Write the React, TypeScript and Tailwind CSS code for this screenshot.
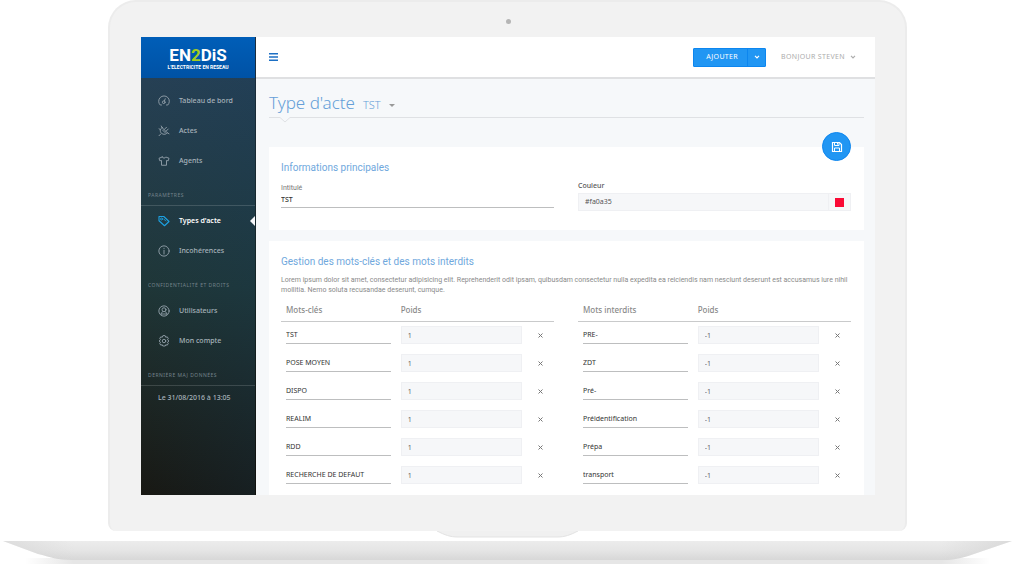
import type { ReactNode } from "react";

type Keyword = { word: string; weight: string };

const keywords: Keyword[] = [
  { word: "TST", weight: "1" },
  { word: "POSE MOYEN", weight: "1" },
  { word: "DISPO", weight: "1" },
  { word: "REALIM", weight: "1" },
  { word: "RDD", weight: "1" },
  { word: "RECHERCHE DE DEFAUT", weight: "1" },
];

const forbidden: Keyword[] = [
  { word: "PRE-", weight: "-1" },
  { word: "ZDT", weight: "-1" },
  { word: "Pré-", weight: "-1" },
  { word: "Préidentification", weight: "-1" },
  { word: "Prépa", weight: "-1" },
  { word: "transport", weight: "-1" },
];

function Icon({ children }: { children: ReactNode }) {
  return (
    <svg
      viewBox="0 0 24 24"
      className="size-3 shrink-0"
      fill="none"
      stroke="currentColor"
      strokeWidth="1.8"
      strokeLinecap="round"
      strokeLinejoin="round"
      aria-hidden="true"
    >
      {children}
    </svg>
  );
}

const icons = {
  gauge: (
    <Icon>
      <path d="M7 20H4.500a10.600 10.600 0 1 1 15 0H17" />
      <circle cx="11.500" cy="14.500" r="2.700" />
      <path d="M12.800 12 14.500 7.500" />
    </Icon>
  ),
  plug: (
    <Icon>
      <path d="m8.500 5.500 10 10c-1.500 2.500-5.500 4-9 2.500s-5-4-5-7 1.500-4.500 4-5.500Z" />
      <path d="m9 10 6 6M12.500 9 17 4.500M16 12.500 20.500 8M6 17.500 2 21.500M2 7.500l3 2M8.500 5.500 6.500 2M18.500 15.500l3.500 2" />
    </Icon>
  ),
  shirt: (
    <Icon>
      <path d="M8.500 4 2 6.500l1.500 5L7 11v9.500h10V11l3.500.5 1.500-5L15.500 4c-1 3-6 3-7 0Z" />
    </Icon>
  ),
  tag: (
    <Icon>
      <path d="M2 3v8.500L13 21.500l9-8.500L11.500 3Z" strokeWidth="2.200" />
      <circle cx="7" cy="8" r="2" />
      <path d="m11.500 8 4 4" />
    </Icon>
  ),
  info: (
    <Icon>
      <circle cx="12" cy="12" r="10.300" />
      <path d="M12 10.500V18M12 6.500v.5" />
    </Icon>
  ),
  user: (
    <Icon>
      <circle cx="12" cy="12" r="10.300" />
      <circle cx="12" cy="9.500" r="4" />
      <path d="M6 18.500c.5-2.500 2-4.500 3.500-5.300M18 18.500c-.5-2.500-2-4.500-3.500-5.300M6.500 18h11" />
    </Icon>
  ),
  gear: (
    <Icon>
      <path d="m9.500 2-1 2.500-3-.8-2 3.300L5 9.500 2 12l3 2.500L3.500 17l2 3.300 3-.8 1 2.500h5l1-2.500 3 .8 2-3.300-1.500-2.500 3-2.500-3-2.500L20.500 7l-2-3.300-3 .8-1-2.500Z" />
      <circle cx="12" cy="12" r="3.500" />
    </Icon>
  ),
};

function NavItem({ icon, label, active = false }: { icon: ReactNode; label: string; active?: boolean }) {
  return (
    <a
      href="#"
      aria-current={active ? "page" : undefined}
      className={
        active
          ? "relative flex h-[30px] items-center gap-[9px] pl-[17px] text-[7px] font-semibold text-white"
          : "flex h-[30px] items-center gap-[9px] pl-[17px] text-[7px] font-medium text-[#a7b3bb]"
      }
    >
      <span className={active ? "text-[#1da1e2]" : "text-[#94a2ac]"}>{icon}</span>
      {label}
      {active && (
        <svg viewBox="0 0 5 10" className="absolute top-[10px] right-0 h-[10px] w-[5px]" aria-hidden="true">
          <path d="M5 0v10L0 5Z" fill="#f6f7fa" />
        </svg>
      )}
    </a>
  );
}

function NavLabel({ children, ruled = false }: { children: ReactNode; ruled?: boolean }) {
  return (
    <h2
      className={
        ruled
          ? "flex h-[30px] items-end border-b border-white/15 pb-[6px] pl-[7px] text-[5px] leading-[8px] tracking-widest text-[#74838b]"
          : "flex h-[30px] items-end border-b border-transparent pb-[6px] pl-[7px] text-[5px] leading-[8px] tracking-widest text-[#74838b]"
      }
    >
      {children}
    </h2>
  );
}

function Logo() {
  return (
    <div className="flex h-[41px] items-center justify-center bg-linear-to-b from-[#005eb8] to-[#0052a5]">
      <svg viewBox="0 0 62 28" className="h-7 w-[62px]" role="img" aria-label="Enedis">
        <g fontFamily="Roboto, sans-serif" fontWeight="700" fill="#fff" textAnchor="middle">
          <text x="31" y="17" fontSize="17">
            EN<tspan fill="#a5cd1e">2</tspan>DiS
          </text>
          <text x="31" y="25" fontSize="5">L’ELECTRICITE EN RESEAU</text>
        </g>
      </svg>
    </div>
  );
}

function Chevron() {
  return (
    <svg viewBox="0 0 6 4" className="h-1 w-[6px]" fill="none" stroke="currentColor" strokeWidth="1.200" aria-hidden="true">
      <path d="m1 .8 2 2 2-2" />
    </svg>
  );
}

function KeywordTable({ title, rows }: { title: string; rows: Keyword[] }) {
  return (
    <table className="w-full table-fixed border-collapse text-left">
      <thead>
        <tr className="h-[21px] border-b border-[#c9cacb] text-[8px] leading-[10px] text-[#8a8a8a]">
          <th className="w-[42%] px-[5px] py-0 font-medium">{title}</th>
          <th className="w-[48%] px-[5px] py-0 font-medium">Poids</th>
          <th className="w-[10%]" aria-label="Supprimer" />
        </tr>
      </thead>
      <tbody>
        {rows.map((row) => (
          <tr key={row.word} className="h-7">
            <td className="px-[5px] py-0">
              <input
                aria-label={title}
                defaultValue={row.word}
                className="block h-[18px] w-full border-b border-[#bdbebf] bg-transparent text-[7px] leading-[10px] text-[#333]"
              />
            </td>
            <td className="px-[5px] py-0">
              <input
                aria-label={`Poids de ${row.word}`}
                defaultValue={row.weight}
                className="block h-[18px] w-full border border-[#eff0f3] bg-[#f6f7f9] px-[6px] text-[7px] leading-[10px] text-[#666]"
              />
            </td>
            <td className="p-0 text-center">
              <button type="button" aria-label={`Supprimer ${row.word}`} className="block h-[18px] w-full text-[#777]">
                <svg viewBox="0 0 5 5" className="mx-auto size-[5px]" stroke="currentColor" aria-hidden="true">
                  <path d="m.5.5 4 4m0-4-4 4" />
                </svg>
              </button>
            </td>
          </tr>
        ))}
      </tbody>
    </table>
  );
}

function Sidebar() {
  return (
    <aside className="flex w-[115px] shrink-0 flex-col border-r border-black/30 bg-linear-to-b from-[#28425a] via-[#1f3637] via-55% to-[#181813]">
      <Logo />
      <nav className="flex-1 bg-linear-to-r from-transparent to-[#123c5c]/20 pt-2">
        <NavItem icon={icons.gauge} label="Tableau de bord" />
        <NavItem icon={icons.plug} label="Actes" />
        <NavItem icon={icons.shirt} label="Agents" />
        <NavLabel ruled>PARAMÈTRES</NavLabel>
        <NavItem icon={icons.tag} label="Types d'acte" active />
        <NavItem icon={icons.info} label="Incohérences" />
        <NavLabel>CONFIDENTIALITÉ ET DROITS</NavLabel>
        <NavItem icon={icons.user} label="Utilisateurs" />
        <NavItem icon={icons.gear} label="Mon compte" />
        <NavLabel ruled>DERNIÈRE MAJ DONNÉES</NavLabel>
        <p className="pt-[7px] pl-[17px] text-[7px] leading-[10px] font-medium text-[#a7b3bb]">Le 31/08/2016 à 13:05</p>
      </nav>
    </aside>
  );
}

function TopBar() {
  return (
    <header className="flex h-[42px] items-center justify-between border-b-2 border-[#dfe0e2] bg-white pr-[19px] pl-[13px]">
      <button type="button" aria-label="Menu" className="text-[#1c6fc4]">
        <svg viewBox="0 0 9 8" className="h-2 w-[9px]" fill="currentColor" aria-hidden="true">
          <path d="M0 0h9v1.500H0zM0 3.200h9v1.500H0zM0 6.400h9v1.500H0z" />
        </svg>
      </button>
      <div className="flex items-center gap-[15px] text-[7px] leading-[10px]">
        <div className="flex h-[19px] rounded-[1px] border border-[#0d86ef] bg-[#2196f3] text-white">
          <button type="button" className="pr-[9px] pl-3 tracking-wider">AJOUTER</button>
          <button type="button" aria-label="Plus d'options" className="flex w-[18px] items-center justify-center border-l border-[#0d86ef]">
            <Chevron />
          </button>
        </div>
        <button type="button" className="flex items-center gap-[5px] text-[#adadad]">
          <span className="tracking-wider">BONJOUR STEVEN</span>
          <Chevron />
        </button>
      </div>
    </header>
  );
}

function PageTitle() {
  return (
    <div className="relative flex h-[39px] items-end gap-2 border-b border-[#dfe1e4] pb-1 text-[#659fd8]">
      <h1 className="text-[17px] leading-[20px] font-light">Type d'acte</h1>
      <button type="button" className="flex items-center gap-2 text-[11px] leading-[16px] font-light">
        TST
        <svg viewBox="0 0 6 3" className="h-[3px] w-[6px]" fill="#999" aria-hidden="true">
          <path d="M0 0h6L3 3Z" />
        </svg>
      </button>
      <svg viewBox="0 0 10 6" className="absolute top-[38px] left-[11px] h-[6px] w-[10px]" aria-hidden="true">
        <path d="M0 0h10v1L5 5.500 0 1Z" fill="#f6f8fa" />
        <path d="M0 .5 5 5l5-4.500" fill="none" stroke="#dfe1e4" />
      </svg>
    </div>
  );
}

export default function App() {
  return (
    <div className="min-h-screen overflow-hidden bg-white font-['Noto_Sans','Open_Sans',sans-serif]">
      <div className="mr-[117px] ml-[108px] rounded-t-[28px] rounded-b-[8px] border-2 border-b-0 border-[#ececec] bg-[#f2f2f2] pr-[30px] pb-9 pl-[31px]">
        <div className="flex h-[35px] items-center justify-center pt-1">
          <span className="size-[5px] rounded-full bg-[#b5b5b5]" />
        </div>
        <div className="flex bg-[#f6f8fa]">
          <Sidebar />
          <div className="min-w-0 flex-1">
            <TopBar />
            <main className="pr-[11px] pl-[13px]">
              <PageTitle />
              <section className="relative mt-[29px] bg-white pt-[15px] pr-[13px] pb-[19px] pl-3">
                <button
                  type="button"
                  aria-label="Enregistrer"
                  className="absolute -top-[15px] right-[13px] flex size-[29px] items-center justify-center rounded-full border border-[#0d86ef] bg-[#2196f3] text-white"
                >
                  <svg viewBox="0 0 12 12" className="size-3" fill="none" stroke="currentColor" aria-hidden="true">
                    <path d="M1.500 1.500h7l2 2v7h-9Z" strokeWidth="1.200" />
                    <path d="M3.500 1.500v3h4.500v-3M3.500 10.500V7h5v3.500M6.500 2v1.500" />
                  </svg>
                </button>
                <h2 className="font-[Roboto] text-[10px] leading-[12px] text-[#70a8dd]">Informations principales</h2>
                <div className="mt-[7px] grid grid-cols-2 gap-6">
                  <div className="pt-[2px]">
                    <label htmlFor="intitule" className="block font-[Roboto] text-[7px] leading-[10px] text-[#777]">Intitulé</label>
                    <input
                      id="intitule"
                      defaultValue="TST"
                      className="block h-[15px] w-full border-b border-[#bdbebf] pb-[2px] text-[7px] leading-[10px] font-medium text-[#333]"
                    />
                  </div>
                  <div>
                    <label htmlFor="couleur" className="block text-[7px] leading-[10px] font-medium text-[#555]">Couleur</label>
                    <div className="mt-[2px] flex h-[18px] border border-[#eff0f3] bg-[#f6f7f9]">
                      <input
                        id="couleur"
                        defaultValue="#fa0a35"
                        className="min-w-0 flex-1 bg-transparent px-[6px] text-[7px] leading-[10px] text-[#555]"
                      />
                      <button type="button" aria-label="Choisir la couleur" className="flex w-[22px] items-center justify-center border-l border-[#eff0f3]">
                        <span className="size-[9px] bg-[#fa0a35]" />
                      </button>
                    </div>
                  </div>
                </div>
              </section>
              <section className="mt-[11px] bg-white pt-[15px] pr-[13px] pb-[6px] pl-3">
                <h2 className="font-[Roboto] text-[10px] leading-[12px] text-[#70a8dd]">Gestion des mots-clés et des mots interdits</h2>
                <p className="mt-[7px] font-[Roboto] text-[7px] leading-[10px] text-[#8a8a8a]">
                  Lorem ipsum dolor sit amet, consectetur adipisicing elit. Reprehenderit odit ipsam, quibusdam consectetur
                  nulla expedita ea reiciendis nam nesciunt deserunt est accusamus iure nihil mollitia. Nemo soluta
                  recusandae deserunt, cumque.
                </p>
                <div className="mt-[5px] grid grid-cols-2 gap-6">
                  <KeywordTable title="Mots-clés" rows={keywords} />
                  <KeywordTable title="Mots interdits" rows={forbidden} />
                </div>
              </section>
            </main>
          </div>
        </div>
      </div>
      <div className="mr-[9px] ml-0 flex justify-center">
        <svg viewBox="0 0 141 10" className="h-[10px] w-[141px]" aria-hidden="true">
          <path d="M0 0h141c-8 4-13 6-21 6H21C13 6 8 4 0 0Z" fill="#f0f0f0" />
          <path d="M0 0c8 4 13 6 21 6h99c8 0 13-2 21-6" fill="none" stroke="#e3e3e3" />
        </svg>
      </div>
      <svg viewBox="0 0 1024 23" preserveAspectRatio="none" className="block h-[23px] w-full" aria-hidden="true">
        <defs>
          <linearGradient id="base" x1="0" y1="0" x2="0" y2="1">
            <stop offset="0" stopColor="#ececec" />
            <stop offset=".5" stopColor="#e5e5e5" />
            <stop offset="1" stopColor="#d7d7d7" />
          </linearGradient>
          <linearGradient id="shadow" x1="0" y1="0" x2="1" y2="0">
            <stop offset="0" stopColor="#e6e6e6" stopOpacity="0" />
            <stop offset=".05" stopColor="#e6e6e6" />
            <stop offset=".95" stopColor="#e6e6e6" />
            <stop offset="1" stopColor="#e6e6e6" stopOpacity="0" />
          </linearGradient>
          <linearGradient id="edges" x1="0" y1="0" x2="1" y2="0">
            <stop offset="0" stopColor="#cfcfcf" stopOpacity=".5" />
            <stop offset=".07" stopColor="#cfcfcf" stopOpacity="0" />
            <stop offset=".93" stopColor="#cfcfcf" stopOpacity="0" />
            <stop offset="1" stopColor="#cfcfcf" stopOpacity=".6" />
          </linearGradient>
        </defs>
        <path d="M25 17h965v6H25Z" fill="url(#shadow)" />
        <path d="M3 0h1009l-38 13c-12 4-20 6-32 6H72c-14 0-22-3-34-6Z" fill="url(#base)" />
        <path d="M3 0h1009l-38 13c-12 4-20 6-32 6H72c-14 0-22-3-34-6Z" fill="url(#edges)" />
      </svg>
    </div>
  );
}
